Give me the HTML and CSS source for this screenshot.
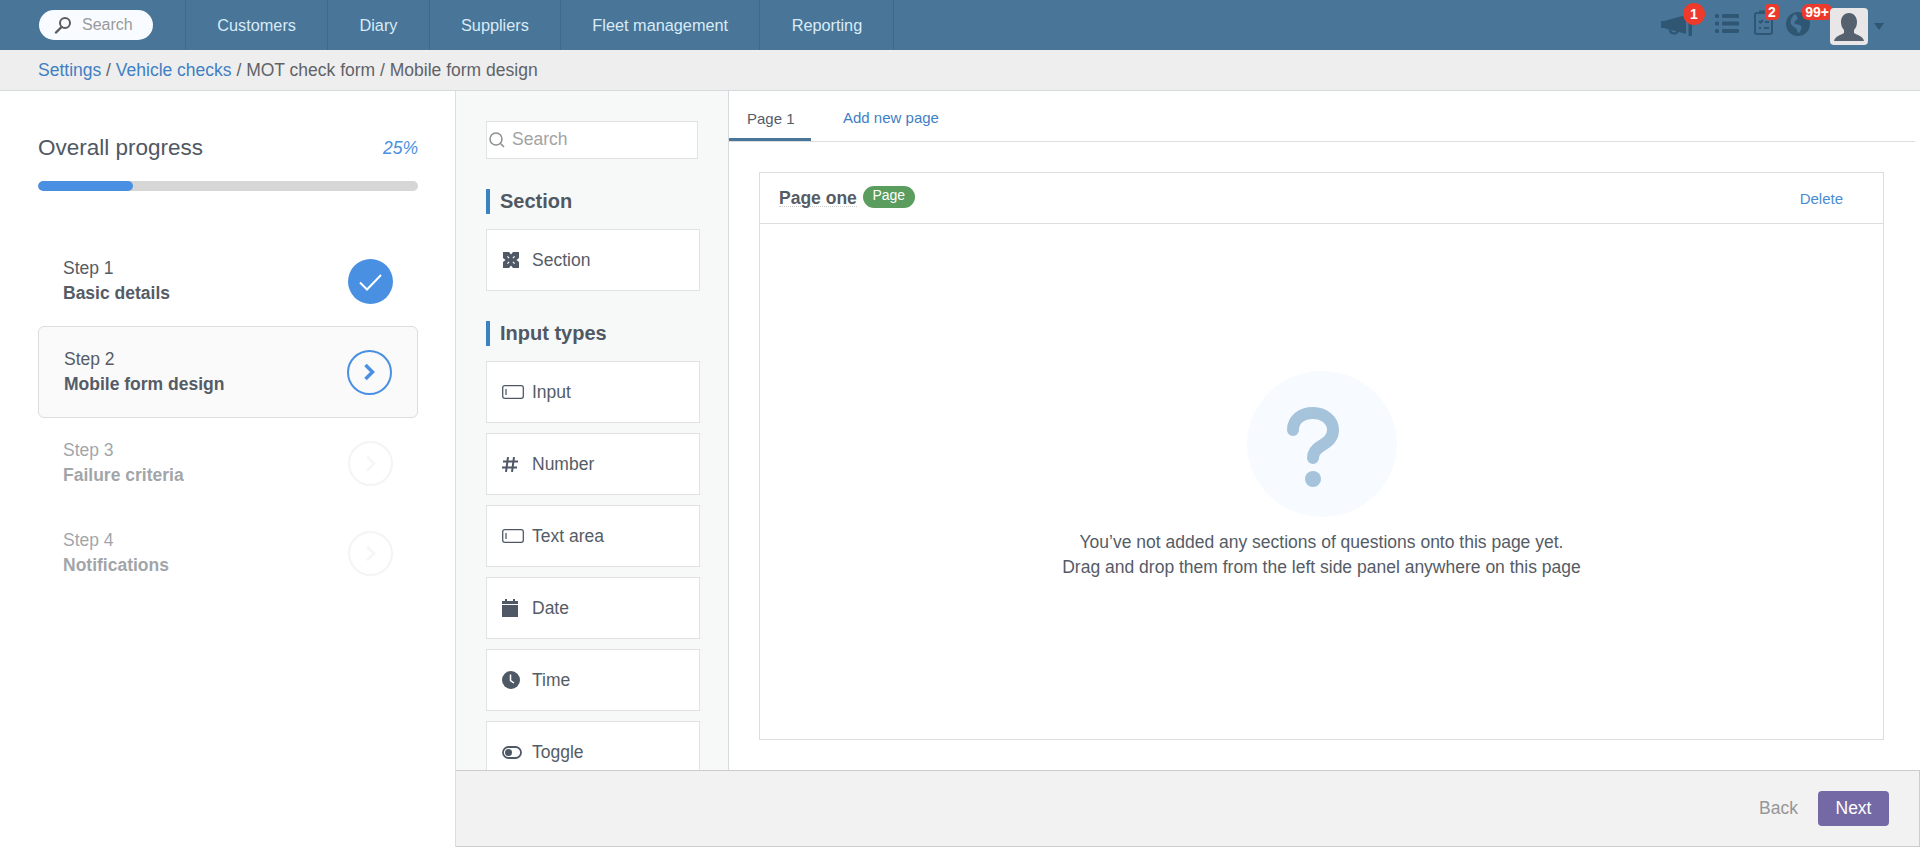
FILE: index.html
```html
<!DOCTYPE html>
<html lang="en">
<head>
<meta charset="utf-8">
<title>Mobile form design</title>
<link rel="stylesheet" href="styles.css">
</head>
<body>
<header class="topbar">
  <div class="search-slot">
    <div class="pill">
      <svg class="pill-icon" viewBox="0 0 18 18"><circle cx="11" cy="7" r="5" fill="none" stroke="#5c5c5c" stroke-width="2"/><path d="M7.5 11 2 16.5" stroke="#5c5c5c" stroke-width="2.4" stroke-linecap="round"/></svg>
      <span>Search</span>
    </div>
  </div>
  <nav class="nav">
    <a class="nav-item">Customers</a>
    <a class="nav-item">Diary</a>
    <a class="nav-item">Suppliers</a>
    <a class="nav-item">Fleet management</a>
    <a class="nav-item">Reporting</a>
  </nav>
  <div class="tools">
    <div class="tool tool-mega">
      <svg viewBox="0 0 32 22" width="32" height="22"><path d="M0 6h3L25 0v19L3 13H0z" fill="#2f5673"/><path d="M9 14c-.5 5 7.500 6.500 8 1" fill="none" stroke="#2f5673" stroke-width="2.200"/><rect x="27.500" y="0" width="3.500" height="21" rx="1" fill="#2f5673"/></svg>
      <span class="badge badge-round">1</span>
    </div>
    <div class="tool tool-list">
      <svg viewBox="0 0 24 21" width="24" height="21" fill="#2f5673"><rect x="0" y="1" width="4" height="4" rx="1.500"/><rect x="0" y="8.500" width="4" height="4" rx="1.500"/><rect x="0" y="16" width="4" height="4" rx="1.500"/><rect x="7" y="1" width="17" height="4" rx="1"/><rect x="7" y="8.500" width="17" height="4" rx="1"/><rect x="7" y="16" width="17" height="4" rx="1"/></svg>
    </div>
    <div class="tool tool-clip">
      <svg viewBox="0 0 19 25" width="19" height="25" fill="none" stroke="#2f5673" stroke-width="2"><rect x="1" y="3" width="17" height="21" rx="2"/><path d="M6 3V1.500h7V3M5 11l1.500 1.500L9 10M11 12h4M5 18h2M10 18h5" /></svg>
      <span class="badge badge-two">2</span>
    </div>
    <div class="tool tool-globe">
      <svg viewBox="0 0 24 24" width="24" height="24"><circle cx="12" cy="12" r="12" fill="#2f5673"/><path d="M9 2c2 2 3 3 2.500 5-.5 1.500-3 1.500-3 3.500 0 1.500 2 1.500 3.500 2 2 .5 3.500 1 3.500 3 0 2-1 3.500-2.500 5.500l-1.500-.5c0-2-.5-3.500-2-4.500-2-1.500-5-3-5-6 0-3 2-6 4.500-8z" fill="#487598"/></svg>
      <span class="badge badge-many">99+</span>
    </div>
    <div class="avatar">
      <svg viewBox="0 0 38 37" width="38" height="37"><path d="M19 5c5 0 8 4 8 9 0 3-1 6-3 8v3c3 2 9 3 10 8H4c1-5 7-6 10-8v-3c-2-2-3-5-3-8 0-5 3-9 8-9z" fill="#55616e"/></svg>
    </div>
    <span class="caret"></span>
  </div>
</header>

<div class="crumbs"><a>Settings</a> / <a>Vehicle checks</a> / MOT check form / Mobile form design</div>

<div class="layout">
  <aside class="progress">
    <div class="progress-head">
      <span class="progress-title">Overall progress</span>
      <span class="progress-pct">25%</span>
    </div>
    <div class="bar"><div class="bar-fill"></div></div>
    <ol class="steps">
      <li class="step">
        <div class="step-text"><span>Step 1</span><strong>Basic details</strong></div>
        <span class="dot dot-done"><svg viewBox="0 0 45 45" width="45" height="45"><path d="M12 23.500l7 7L33 16" fill="none" stroke="#fff" stroke-width="2"/></svg></span>
      </li>
      <li class="step step-active">
        <div class="step-text"><span>Step 2</span><strong>Mobile form design</strong></div>
        <span class="dot dot-current"><svg viewBox="0 0 40 40" width="40" height="40"><path d="M16.500 13l7 7-7 7" fill="none" stroke="#4a90e2" stroke-width="3.500"/></svg></span>
      </li>
      <li class="step step-off">
        <div class="step-text"><span>Step 3</span><strong>Failure criteria</strong></div>
        <span class="dot dot-todo"><svg viewBox="0 0 41 41" width="41" height="41"><path d="M17 13.500l7 7-7 7" fill="none" stroke="#f0f0f0" stroke-width="2.500"/></svg></span>
      </li>
      <li class="step step-off">
        <div class="step-text"><span>Step 4</span><strong>Notifications</strong></div>
        <span class="dot dot-todo"><svg viewBox="0 0 41 41" width="41" height="41"><path d="M17 13.500l7 7-7 7" fill="none" stroke="#f0f0f0" stroke-width="2.500"/></svg></span>
      </li>
    </ol>
  </aside>

  <div class="workspace">
    <div class="panes">
      <section class="palette">
        <div class="palette-search">
          <svg viewBox="0 0 16 16" width="16" height="16" fill="none" stroke="#8f8f8f" stroke-width="1.500"><circle cx="7" cy="7" r="6"/><path d="m11.500 11.500 3.500 3.500"/></svg>
          <span>Search</span>
        </div>
        <h3 class="group-title">Section</h3>
        <div class="tiles">
          <div class="tile"><span class="tile-icon"><svg viewBox="-1 0 17 16" width="17" height="16"><path d="M0 0h16v16H0z" fill="#4f5965"/><path d="M6 0h4L8 2.500zM6 16h4l-2-2.500zM0 6v4l2.500-2zM16 6v4l-2.500-2zM4.800 4l1.700 1.700-.8.8L4 4.800zM11.200 4l.8.8-1.700 1.700-.8-.8zM4 11.200l1.700-1.700.8.8L4.800 12zM12 11.200l-.8.8-1.700-1.700.8-.8z" fill="#fff"/></svg></span>Section</div>
        </div>
        <h3 class="group-title group-second">Input types</h3>
        <div class="tiles">
          <div class="tile"><span class="tile-icon"><svg viewBox="0 0 22 14" width="22" height="14" fill="none" stroke="#4f5965" stroke-width="1.300"><rect x=".7" y=".7" width="20.600" height="12.600" rx="2"/><path d="M4 4v6"/></svg></span>Input</div>
          <div class="tile"><span class="tile-icon"><svg viewBox="0 0 16 15" width="16" height="15" fill="none" stroke="#4f5965" stroke-width="2"><path d="M6 0 4 15M12 0l-2 15M1 4.500h15M0 10.500h15"/></svg></span>Number</div>
          <div class="tile"><span class="tile-icon"><svg viewBox="0 0 22 14" width="22" height="14" fill="none" stroke="#4f5965" stroke-width="1.300"><rect x=".7" y=".7" width="20.600" height="12.600" rx="2"/><path d="M4 4v6"/></svg></span>Text area</div>
          <div class="tile"><span class="tile-icon"><svg viewBox="0 0 16 18" width="16" height="18" fill="#4f5965"><path d="M3 0h2v3H3zM11 0h2v3h-2zM0 2h16v3H0zM0 6h16v12H0z"/></svg></span>Date</div>
          <div class="tile"><span class="tile-icon"><svg viewBox="0 0 18 18" width="18" height="18"><circle cx="9" cy="9" r="9" fill="#4f5965"/><path d="M8.500 3.500v6l3.500 2.500" fill="none" stroke="#fff" stroke-width="1.500"/></svg></span>Time</div>
          <div class="tile"><span class="tile-icon"><svg viewBox="0 0 20 13" width="20" height="13"><rect x="1" y="1" width="18" height="11" rx="5.500" fill="none" stroke="#4f5965" stroke-width="1.800"/><circle cx="6.500" cy="6.500" r="3.500" fill="#4f5965"/></svg></span>Toggle</div>
        </div>
      </section>

      <main class="editor">
        <div class="tabs">
          <a class="tab tab-active">Page 1</a>
          <a class="tab tab-add">Add new page</a>
        </div>
        <div class="card">
          <div class="card-head">
            <span class="card-title">Page one</span>
            <span class="tag">Page</span>
            <a class="card-delete">Delete</a>
          </div>
          <div class="card-body">
            <div class="empty-dot">
              <svg viewBox="0 0 52 80" width="52" height="80"><path d="M6 23C6 12 15 6 26 6s20 7 20 17c0 9-7 13-12 16-5 3-8 6-8 12" fill="none" stroke="#a5c3da" stroke-width="12" stroke-linecap="round"/><circle cx="26" cy="72" r="8" fill="#a5c3da"/></svg>
            </div>
            <p class="empty-text">You’ve not added any sections of questions onto this page yet.<br>Drag and drop them from the left side panel anywhere on this page</p>
          </div>
        </div>
      </main>
    </div>
    <footer class="actions">
      <a class="back">Back</a>
      <a class="next">Next</a>
    </footer>
  </div>
</div>
</body>
</html>
```
FILE: styles.css
```css
* { box-sizing: border-box; }
html, body { margin: 0; height: 100%; }
body {
  height: 847px;
  overflow: hidden;
  display: flex;
  flex-direction: column;
  font-family: "Liberation Sans", Arial, sans-serif;
  font-size: 17.5px;
  color: #555c66;
  background: #fff;
}

/* Top bar */
.topbar { height: 50px; flex: none; display: flex; align-items: stretch; background: #487598; font-size: 16px; }
.search-slot { width: 186px; flex: none; padding: 10px 0 0 39px; border-right: 1px solid #3f6a8b; }
.pill {
  width: 114px; height: 30px; border-radius: 15px; background: #f8fbff;
  display: flex; align-items: center; padding-left: 15px; gap: 10px; color: #9a9a9a;
}
.pill-icon { width: 18px; height: 18px; flex: none; }
.nav { display: flex; }
.nav-item {
  display: flex; align-items: center; padding: 0 31.250px; color: #d9ebf7; font-size: 16.300px;
  border-right: 1px solid #3f6a8b; white-space: nowrap;
}
.tools { margin-left: auto; display: flex; align-items: flex-start; padding-right: 36px; }
.tool { position: relative; flex: none; }
.tool svg { display: block; }
.tool-mega { margin-top: 15px; margin-right: 22px; width: 32px; }
.tool-list { margin-top: 13px; margin-right: 15px; width: 24px; }
.tool-clip { margin-top: 10px; margin-right: 13px; width: 19px; }
.tool-globe { margin-top: 12px; margin-right: 20px; width: 24px; }
.badge {
  position: absolute; background: #ee3a2b; color: #fff; font-weight: 700;
  display: flex; align-items: center; justify-content: center;
}
.badge-round { left: 22px; top: -12px; width: 22px; height: 22px; border-radius: 50%; font-size: 14px; }
.badge-two { left: 11px; top: -6px; width: 14px; height: 16px; border-radius: 4px; font-size: 14px; }
.badge-many { left: 16px; top: -8px; width: 30px; height: 16px; border-radius: 6px; font-size: 14px; }
.avatar { margin-top: 8px; width: 38px; height: 37px; border-radius: 4px; background: #e8e6e6; overflow: hidden; position: relative; z-index: 1; }
.avatar svg { display: block; }
.caret {
  margin: 23px 0 0 6px; width: 0; height: 0;
  border-left: 5.500px solid transparent; border-right: 5.500px solid transparent; border-top: 7px solid #2f5673;
}

/* Breadcrumb */
.crumbs {
  height: 41px; flex: none; padding: 0 38px; line-height: 40px; background: #eee;
  border-bottom: 1px solid #d5dadd; color: #5f6368;
}
.crumbs a { color: #3f7fc4; }

/* Layout */
.layout { flex: 1; min-height: 0; display: flex; }
.progress { width: 456px; flex: none; padding: 44px 37px 0 38px; border-right: 1px solid #ddd; }
.progress-head { display: flex; justify-content: space-between; align-items: center; height: 26px; }
.progress-title { font-size: 22.500px; color: #505862; }
.progress-pct { font-style: italic; color: #4a90e2; }
.bar { margin-top: 20px; height: 10px; border-radius: 5px; background: #d6d6d6; overflow: hidden; }
.bar-fill { width: 25%; height: 100%; border-radius: 5px; background: #4a90e2; }
.steps { list-style: none; margin: 45px 0 0; padding: 0; }
.step { height: 90px; display: flex; align-items: center; justify-content: space-between; padding: 0 25px; }
.step-active { height: 92px; background: #fafafa; border: 1px solid #ddd; border-radius: 6px; }
.step-off { opacity: .55; }
.step-text { display: flex; flex-direction: column; line-height: 25px; }
.step-text strong { font-weight: 700; }
.dot { width: 45px; height: 45px; border-radius: 50%; flex: none; display: block; }
.dot svg { display: block; }
.dot-done { background: #4a90e2; }
.dot-current { border: 2.500px solid #4a90e2; }
.dot-todo { border: 2px solid #ececec; }

.workspace { flex: 1; min-width: 0; display: flex; flex-direction: column; }
.panes { flex: 1; min-height: 0; display: flex; }

/* Palette */
.palette {
  width: 273px; flex: none; padding: 30px 0 0 30px; background: #f7f9f9;
  border-right: 1px solid #d5dadd; overflow: hidden;
}
.palette-search {
  width: 212px; height: 38px; background: #fff; border: 1px solid #e2e2e2;
  display: flex; align-items: center; gap: 7px; padding: 0 0 1px 2px; color: #a3a3a3;
}
.group-title {
  margin: 30px 0 15px; height: 25px; line-height: 25px; padding-left: 10px;
  border-left: 4px solid #3b82c0; font-size: 20px; font-weight: 700; color: #505862;
}
.group-second { margin-top: 30px; }
.tiles { display: flex; flex-direction: column; gap: 10px; }
.tile {
  width: 214px; height: 62px; flex: none; background: #fff; border: 1px solid #e2e2e2;
  display: flex; align-items: center; padding-left: 15px;
}
.tile-icon { width: 30px; flex: none; display: flex; align-items: center; }
.tile-icon svg { display: block; }

/* Editor */
.editor { flex: 1; min-width: 0; display: flex; flex-direction: column; padding-right: 5px; }
.tabs { height: 51px; flex: none; display: flex; border-bottom: 1px solid #ddd; }
.tab { height: 50px; font-size: 15px; line-height: 55px; }
.tab-active { width: 82px; padding-left: 18px; border-bottom: 3px solid #487598; color: #555c66; }
.tab-add { margin-left: 32px; color: #3f7fc4; line-height: 53px; }
.card { margin: 30px 31px 0 30px; height: 568px; border: 1px solid #ddd; display: flex; flex-direction: column; }
.card-head { height: 51px; flex: none; display: flex; align-items: center; padding: 0 40px 0 19px; border-bottom: 1px solid #ddd; }
.card-title { font-weight: 700; border-bottom: 1px dotted #ccc; line-height: 16px; }
.tag {
  margin-left: 6px; margin-top: -2px; height: 22px; width: 52px; border-radius: 11px; background: #5a9d5f; color: #fff;
  font-size: 14px; line-height: 18px; text-align: center;
}
.card-delete { margin-left: auto; font-size: 15px; color: #4a8cd2; }
.card-body { flex: 1; padding-top: 147px; display: flex; flex-direction: column; align-items: center; }
.empty-dot {
  width: 150px; height: 146px; border-radius: 50%; background: #f7fbff;
  display: flex; align-items: center; justify-content: center; padding: 5px 18px 0 0;
}
.empty-text { margin: 13px 0 0; line-height: 25px; text-align: center; }

/* Footer */
.actions {
  height: 77px; flex: none; background: #f2f2f2;
  border-top: 1px solid #ccc; border-bottom: 1px solid #ccc; border-right: 1px solid #ccc;
  display: flex; align-items: flex-start; justify-content: flex-end; padding: 20px 30px 0 0;
}
.back { line-height: 35px; color: #969696; margin-right: 20px; }
.next {
  width: 71px; height: 35px; border-radius: 4px; background: #7468a5; color: #fff;
  line-height: 35px; text-align: center;
}
```
